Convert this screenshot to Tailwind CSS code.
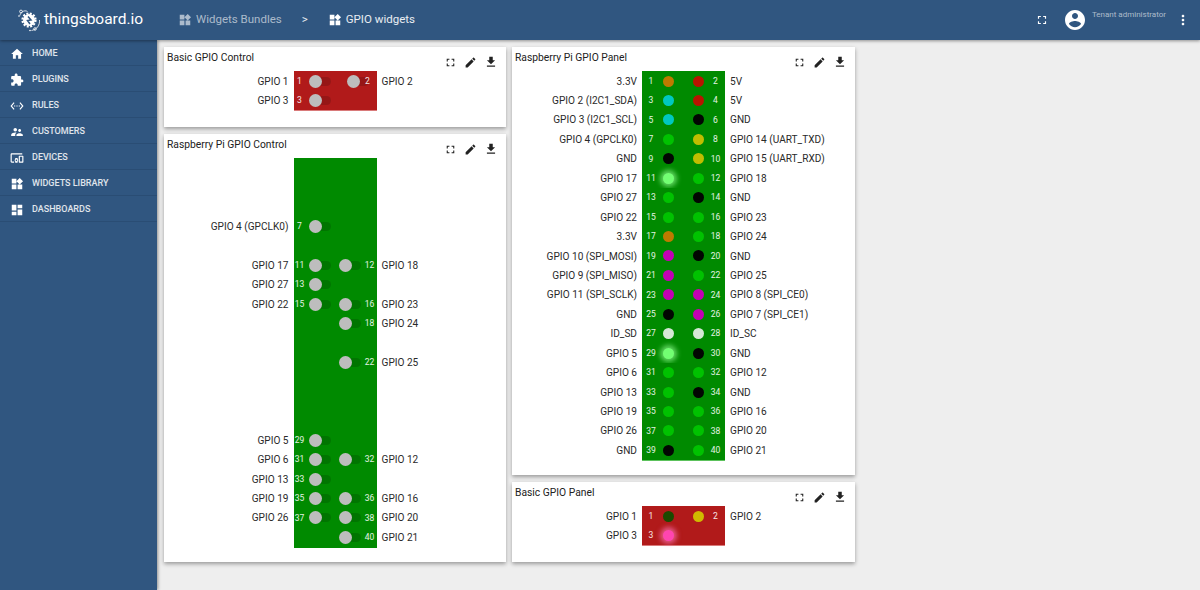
<!DOCTYPE html>
<html>
<head>
<meta charset="utf-8">
<script src="https://cdn.jsdelivr.net/npm/@tailwindcss/browser@4"></script>
</head>
<body class="m-0 h-[590px] w-[1200px] overflow-hidden bg-[#eeeeee] font-['Roboto',sans-serif] text-[#2a2a2a]">
<header class="relative z-20 flex h-10 items-center bg-[#305680] text-white shadow-[0_1px_3px_rgba(0,0,0,0.4)]">
  <div class="flex w-[158px] shrink-0 items-center pl-[17px]">
    <svg class="h-[24px] w-[24px] shrink-0" viewBox="0 0 24 24" fill="none" stroke="#fff">
      <path d="M3 7.5C3.5 4.5 7 1.5 10.5 3.5" stroke-width="0.8"/><circle cx="4" cy="3.5" r="1.4" stroke-width="0.8"/><circle cx="2" cy="8" r="0.8" fill="#fff" stroke="none"/>
      <path d="M22.5 12C23 17 20 21.5 14.5 22.5" stroke-width="0.8"/><circle cx="18" cy="21" r="1.3" stroke-width="0.8"/><circle cx="13" cy="22.5" r="0.8" fill="#fff" stroke="none"/>
      <circle cx="12" cy="12" r="6.5" fill="none" stroke="#fff" stroke-width="2.2" stroke-dasharray="2 1.4"/>
      <circle cx="12" cy="12" r="6" fill="#fff" stroke="none"/>
      <path d="M11 8.5L14 12L10.5 12.5L13 16" stroke="#305680" stroke-width="1.5"/>
    </svg>
    <span class="ml-[3px] text-[15.5px] font-normal leading-none">thingsboard.io</span>
  </div>
  <div class="ml-[20px] flex items-center text-[11.5px]">
    <svg class="mr-[4px] h-[14px] w-[14px] fill-white/60" viewBox="0 0 24 24"><path d="M13 13v8h8v-8h-8zM3 21h8v-8H3v8zM3 3v8h8V3H3zm13.66-1.31L11 7.34 16.66 13l5.66-5.66-5.66-5.65z"/></svg>
    <span class="text-white/60">Widgets Bundles</span>
    <span class="ml-[20px] text-white/90">&gt;</span>
    <svg class="ml-[20px] mr-[4px] h-[14px] w-[14px] fill-white" viewBox="0 0 24 24"><path d="M13 13v8h8v-8h-8zM3 21h8v-8H3v8zM3 3v8h8V3H3zm13.66-1.31L11 7.34 16.66 13l5.66-5.66-5.66-5.65z"/></svg>
    <span class="text-white/90">GPIO widgets</span>
  </div>
  <div class="ml-auto flex items-center">
    <svg class="h-[14px] w-[14px] fill-white" viewBox="0 0 24 24"><path d="M7 14H5v5h5v-2H7v-3zm-2-4h2V7h3V5H5v5zm12 7h-3v2h5v-5h-2v3zM14 5v2h3v3h2V5h-5z"/></svg>
    <svg class="ml-[14px] h-[24px] w-[24px] fill-white" viewBox="0 0 24 24"><path d="M12 2C6.48 2 2 6.48 2 12s4.48 10 10 10 10-4.48 10-10S17.52 2 12 2zm0 3c1.66 0 3 1.34 3 3s-1.34 3-3 3-3-1.34-3-3 1.34-3 3-3zm0 14.2c-2.5 0-4.71-1.28-6-3.22.03-1.99 4-3.08 6-3.08 1.99 0 5.97 1.09 6 3.08-1.29 1.94-3.5 3.22-6 3.22z"/></svg>
    <span class="mb-[11px] ml-[5px] text-[8px] leading-none text-white/60">Tenant administrator</span>
    <svg class="ml-[9px] mr-[9px] h-[16px] w-[16px] fill-white" viewBox="0 0 24 24"><path d="M12 8c1.1 0 2-.9 2-2s-.9-2-2-2-2 .9-2 2 .9 2 2 2zm0 2c-1.1 0-2 .9-2 2s.9 2 2 2 2-.9 2-2-.9-2-2-2zm0 6c-1.1 0-2 .9-2 2s.9 2 2 2 2-.9 2-2-.9-2-2-2z"/></svg>
  </div>
</header>
<div class="flex h-[550px]">
  <nav class="z-10 w-[157px] shrink-0 bg-[#305680] shadow-[1px_0_3px_rgba(0,0,0,0.4)]">
    <a class="flex h-[26px] items-center border-b border-[#2a4d74] pl-[10px] pt-[2px] text-[9px] font-medium text-white/85"><svg class="mr-[8px] h-[14px] w-[14px] fill-white" viewBox="0 0 24 24"><path d="M10 20v-6h4v6h5v-8h3L12 3 2 12h3v8z"/></svg>HOME</a>
    <a class="flex h-[26px] items-center border-b border-[#2a4d74] pl-[10px] pt-[2px] text-[9px] font-medium text-white/85"><svg class="mr-[8px] h-[14px] w-[14px] fill-white" viewBox="0 0 24 24"><path d="M20.5 11H19V7c0-1.1-.9-2-2-2h-4V3.5C13 2.12 11.88 1 10.5 1S8 2.12 8 3.5V5H4c-1.1 0-1.99.9-1.99 2v3.8H3.5c1.49 0 2.7 1.21 2.7 2.7s-1.21 2.7-2.7 2.7H2V20c0 1.1.9 2 2 2h3.8v-1.5c0-1.49 1.21-2.7 2.7-2.7 1.49 0 2.7 1.21 2.7 2.7V22H17c1.1 0 2-.9 2-2v-4h1.5c1.38 0 2.5-1.12 2.5-2.5S21.88 11 20.5 11z"/></svg>PLUGINS</a>
    <a class="flex h-[26px] items-center border-b border-[#2a4d74] pl-[10px] pt-[2px] text-[9px] font-medium text-white/85"><svg class="mr-[8px] h-[14px] w-[14px] fill-white" viewBox="0 0 24 24"><path d="M7.77 6.76L6.23 5.48.82 12l5.41 6.52 1.54-1.28L3.42 12l4.35-5.24zM7 13h2v-2H7v2zm10-2h-2v2h2v-2zm-6 2h2v-2h-2v2zm6.77-7.52l-1.54 1.28L20.58 12l-4.35 5.24 1.54 1.28L23.18 12l-5.41-6.52z"/></svg>RULES</a>
    <a class="flex h-[26px] items-center border-b border-[#2a4d74] pl-[10px] pt-[2px] text-[9px] font-medium text-white/85"><svg class="mr-[8px] h-[14px] w-[14px] fill-white" viewBox="0 0 24 24"><path d="M16.5 12c1.38 0 2.49-1.12 2.49-2.5S17.88 7 16.5 7C15.12 7 14 8.12 14 9.5s1.12 2.5 2.5 2.5zM9 11c1.66 0 2.99-1.34 2.99-3S10.66 5 9 5C7.34 5 6 6.34 6 8s1.34 3 3 3zm7.5 3c-1.83 0-5.5.92-5.5 2.75V19h11v-2.25c0-1.83-3.67-2.75-5.5-2.75zM9 13c-2.33 0-7 1.17-7 3.5V19h7v-2.25c0-.85.33-2.34 2.37-3.47C10.5 13.1 9.66 13 9 13z"/></svg>CUSTOMERS</a>
    <a class="flex h-[26px] items-center border-b border-[#2a4d74] pl-[10px] pt-[2px] text-[9px] font-medium text-white/85"><svg class="mr-[8px] h-[14px] w-[14px] fill-white" viewBox="0 0 24 24"><path d="M3 6h18V4H3c-1.1 0-2 .9-2 2v12c0 1.1.9 2 2 2h4v-2H3V6zm10 6H9v1.78c-.61.55-1 1.33-1 2.22s.39 1.67 1 2.22V20h4v-1.78c.61-.55 1-1.34 1-2.22s-.39-1.67-1-2.22V12zm-2 5.5c-.83 0-1.5-.67-1.5-1.5s.67-1.5 1.5-1.5 1.5.67 1.5 1.5-.67 1.5-1.5 1.5zM22 8h-6c-.5 0-1 .5-1 1v10c0 .5.5 1 1 1h6c.5 0 1-.5 1-1V9c0-.5-.5-1-1-1zm-1 10h-4v-8h4v8z"/></svg>DEVICES</a>
    <a class="flex h-[26px] items-center border-b border-[#2a4d74] pl-[10px] pt-[2px] text-[9px] font-medium text-white/85"><svg class="mr-[8px] h-[14px] w-[14px] fill-white" viewBox="0 0 24 24"><path d="M13 13v8h8v-8h-8zM3 21h8v-8H3v8zM3 3v8h8V3H3zm13.66-1.31L11 7.34 16.66 13l5.66-5.66-5.66-5.65z"/></svg>WIDGETS LIBRARY</a>
    <a class="flex h-[26px] items-center border-b border-[#2a4d74] pl-[10px] pt-[2px] text-[9px] font-medium text-white/85"><svg class="mr-[8px] h-[14px] w-[14px] fill-white" viewBox="0 0 24 24"><path d="M3 13h8V3H3v10zm0 8h8v-6H3v6zm10 0h8V11h-8v10zm0-18v6h8V3h-8z"/></svg>DASHBOARDS</a>
  </nav>
  <main class="grid grid-cols-[342px_343px] gap-x-[6px] pl-[7px] pt-[7px]">
    <div class="flex flex-col gap-[7px]">
      <section id="c1" class="relative h-[80px] bg-white shadow-[0_2px_4px_rgba(0,0,0,0.35)]"></section>
      <section id="c2" class="relative h-[428px] bg-white shadow-[0_2px_4px_rgba(0,0,0,0.35)]"></section>
    </div>
    <div class="flex flex-col gap-[7px]">
      <section id="c3" class="relative h-[428px] bg-white shadow-[0_2px_4px_rgba(0,0,0,0.35)]"></section>
      <section id="c4" class="relative h-[80px] bg-white shadow-[0_2px_4px_rgba(0,0,0,0.35)]"></section>
    </div>
  </main>
</div>
<script>
const head = t => `<div class="flex h-[24px] pl-[3px] pt-[5px] text-[10.3px] leading-[12px] text-[#212121]">${t}</div>
<div class="absolute right-[8px] top-[8px] flex items-center gap-[7px]">
<svg class="h-[13px] w-[13px] fill-[#222]" viewBox="0 0 24 24"><path d="M7 14H5v5h5v-2H7v-3zm-2-4h2V7h3V5H5v5zm12 7h-3v2h5v-5h-2v3zM14 5v2h3v3h2V5h-5z"/></svg>
<svg class="h-[13px] w-[13px] fill-[#222]" viewBox="0 0 24 24"><path d="M3 17.25V21h3.75L17.81 9.94l-3.75-3.75L3 17.25zM20.71 7.04c.39-.39.39-1.02 0-1.41l-2.34-2.34c-.39-.39-1.02-.39-1.41 0l-1.83 1.83 3.75 3.75 1.83-1.83z"/></svg>
<svg class="h-[14px] w-[14px] fill-[#222]" viewBox="0 0 24 24"><path d="M19 9h-4V3H9v6H5l7 7 7-7zM5 18v2h14v-2H5z"/></svg></div>`;
const GREEN='bg-[#008a00]', RED='bg-[#b11a1a]';
const label=(t,side)=>`<div class="${side} truncate px-[5px] pt-[0.6px] text-[10.1px] leading-[19.45px] text-[#2a2a2a]">${t||''}</div>`;
const num=(n,cls)=>`<span class="${cls} text-center text-[8.5px] leading-none text-white/90">${n||''}</span>`;
const tog=on=>on?`<span class="relative h-[9px] w-[22px] rounded-full bg-black/15"><span class="absolute left-0 top-[-2px] h-[13px] w-[13px] rounded-full bg-[#bdbdbd]"></span></span>`:'<span></span>';
function toggles(rows,bg,bar,narrow){
  const cols=narrow?'grid-cols-[15px_22px_16px_22px_8px]':'grid-cols-[15px_22px_8px_22px_16px]';
  return rows.map(([l,a,b,r])=>`<div class="grid h-[19.45px] grid-cols-[1fr_83px_1fr]">${label(l,'text-right')}
    <div class="${bg} grid ${cols} items-center pt-[0.6px]">${num(a,'pr-[3px]')}${tog(a)}<span></span>${tog(b)}${num(b,narrow?'relative -ml-[6px] w-[10px]':'pl-[2px]')}</div>${label(r,'text-left')}</div>`).join('')+`<div class="mx-auto h-px w-[83px] ${bar}"></div>`;
}
const LED={o:'bg-[#bd7a00]',r:'bg-[#b91400]',c:'bg-[#00c8c0]',k:'bg-[#020602]',g:'bg-[#00c200]',y:'bg-[#c0bd00]',m:'bg-[#c400b4]',w:'bg-[#d6e8d6]',
  L:'bg-[#72ff72] shadow-[0_0_5px_3px_rgba(150,255,150,0.65)]',d:'bg-[#1a4a00]',Y:'bg-[#d0ba00]',P:'bg-[#ff45b0] shadow-[0_0_5px_3px_rgba(255,120,190,0.65)]',n:''};
const led=k=>`<span class="mx-auto h-[11px] w-[11px] rounded-full ${LED[k]}"></span>`;
function leds(rows,bg,bar){
  return rows.map(([l,a,ca,cb,b,r])=>`<div class="grid h-[19.45px] grid-cols-[1fr_83px_1fr]">${label(l,'text-right')}
    <div class="${bg} grid grid-cols-[18px_16px_14px_16px_19px] items-center pt-[0.6px]">${num(a,'')}${led(ca)}<span></span>${led(cb)}${num(b,'')}</div>${label(r,'text-left')}</div>`).join('')+`<div class="mx-auto h-px w-[83px] ${bar}"></div>`;
}
document.getElementById('c1').innerHTML=head('Basic GPIO Control')+toggles([['GPIO 1',1,2,'GPIO 2'],['GPIO 3',3,0,'']],RED,'bg-[#d97a7a]',true);
const big=[];
const rowsC={4:['GPIO 4 (GPCLK0)',7,0,''],6:['GPIO 17',11,12,'GPIO 18'],7:['GPIO 27',13,0,''],8:['GPIO 22',15,16,'GPIO 23'],9:['',0,18,'GPIO 24'],11:['',0,22,'GPIO 25'],15:['GPIO 5',29,0,''],16:['GPIO 6',31,32,'GPIO 12'],17:['GPIO 13',33,0,''],18:['GPIO 19',35,36,'GPIO 16'],19:['GPIO 26',37,38,'GPIO 20'],20:['',0,40,'GPIO 21']};
for(let i=1;i<=20;i++)big.push(rowsC[i]||['',0,0,'']);
document.getElementById('c2').innerHTML=head('Raspberry Pi GPIO Control')+toggles(big,GREEN,'bg-[#008a00]');
document.getElementById('c3').innerHTML=head('Raspberry Pi GPIO Panel')+leds([
['3.3V',1,'o','r',2,'5V'],['GPIO 2 (I2C1_SDA)',3,'c','r',4,'5V'],['GPIO 3 (I2C1_SCL)',5,'c','k',6,'GND'],['GPIO 4 (GPCLK0)',7,'g','y',8,'GPIO 14 (UART_TXD)'],
['GND',9,'k','y',10,'GPIO 15 (UART_RXD)'],['GPIO 17',11,'L','g',12,'GPIO 18'],['GPIO 27',13,'g','k',14,'GND'],['GPIO 22',15,'g','g',16,'GPIO 23'],
['3.3V',17,'o','g',18,'GPIO 24'],['GPIO 10 (SPI_MOSI)',19,'m','k',20,'GND'],['GPIO 9 (SPI_MISO)',21,'m','g',22,'GPIO 25'],['GPIO 11 (SPI_SCLK)',23,'m','m',24,'GPIO 8 (SPI_CE0)'],
['GND',25,'k','m',26,'GPIO 7 (SPI_CE1)'],['ID_SD',27,'w','w',28,'ID_SC'],['GPIO 5',29,'L','k',30,'GND'],['GPIO 6',31,'g','g',32,'GPIO 12'],
['GPIO 13',33,'g','k',34,'GND'],['GPIO 19',35,'g','g',36,'GPIO 16'],['GPIO 26',37,'g','g',38,'GPIO 20'],['GND',39,'k','g',40,'GPIO 21']],GREEN,'bg-[#5cc25c]');
document.getElementById('c4').innerHTML=head('Basic GPIO Panel')+leds([['GPIO 1',1,'d','Y',2,'GPIO 2'],['GPIO 3',3,'P','n',0,'']],RED,'bg-[#d97a7a]');
</script>
</body>
</html>
